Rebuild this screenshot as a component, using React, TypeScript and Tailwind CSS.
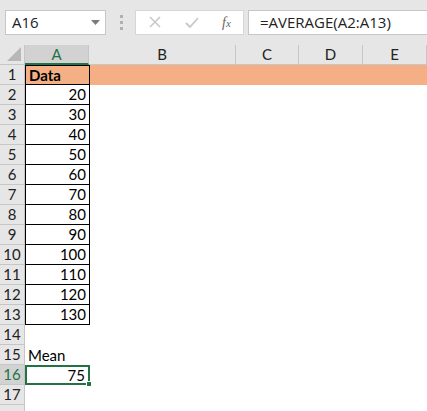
import React from "react";

const COLS = [
  { label: "A", w: "w-[64px]" },
  { label: "B", w: "w-[147px]" },
  { label: "C", w: "w-[63px]" },
  { label: "D", w: "w-[64px]" },
  { label: "E", w: "w-[64px]" },
];

const VALUES = [20, 30, 40, 50, 60, 70, 80, 90, 100, 110, 120, 130];

const cellFont = { fontFamily: "Lato, 'Liberation Sans', sans-serif" };

function RowHeader({ n, active }: { n?: number; active?: boolean }) {
  return (
    <div
      className={`flex h-full w-[25px] shrink-0 items-center justify-center border-r border-b border-[#c6c6c6] text-[15px] ${
        active ? "bg-[#d2d2d2] text-[#217346]" : "bg-[#e6e6e6] text-[#222]"
      }`}
      style={cellFont}
    >
      {n}
    </div>
  );
}

function Row({ n, children, fill }: { n?: number; children?: React.ReactNode; fill?: boolean }) {
  return (
    <div className={`flex h-[20px] ${fill ? "bg-[#f4b084]" : "bg-white"}`}>
      <RowHeader n={n} active={n === 16} />
      {children}
    </div>
  );
}

export default function App() {
  return (
    <div className="h-[411px] w-[427px] overflow-hidden bg-white" style={cellFont}>
      {/* formula bar */}
      <div className="flex h-[45px] items-center bg-[#e6e6e6] pb-px">
        <div className="ml-[5px] flex h-[25px] w-[101px] items-center justify-between border border-[#c6c6c6] bg-white pl-[6px] pr-[5px]">
          <span className="text-[15px] text-[#222]" style={{ fontFamily: "'Open Sans', 'Liberation Sans', sans-serif" }}>
            A16
          </span>
          <svg width="9" height="5" viewBox="0 0 9 5">
            <path d="M0 0h9L4.5 5z" fill="#7a7a7a" />
          </svg>
        </div>
        <div className="ml-[14px] flex w-[3px] flex-col gap-[3px]">
          <span className="h-[3px] w-[3px] bg-[#b0b0b0]" />
          <span className="h-[3px] w-[3px] bg-[#b0b0b0]" />
          <span className="h-[3px] w-[3px] bg-[#b0b0b0]" />
        </div>
        <div className="ml-[12px] flex h-[25px] w-[109px] items-center border border-[#d6d6d6] bg-white">
          <svg width="12" height="12" viewBox="0 0 12 12" className="ml-[13px]">
            <path d="M1 1l10 10M11 1L1 11" stroke="#c8c8c8" strokeWidth="1.6" />
          </svg>
          <svg width="14" height="11" viewBox="0 0 14 11" className="ml-[24px]">
            <path d="M1 6l4 4 8-9" stroke="#c8c8c8" strokeWidth="1.8" fill="none" />
          </svg>
          <span className="ml-[23px] text-[14px] italic text-[#666]" style={{ fontFamily: "'Liberation Serif', serif" }}>
            f<span className="text-[11px]">x</span>
          </span>
        </div>
        <div className="ml-[4px] flex h-[25px] flex-1 items-center border-y border-l border-[#c6c6c6] bg-white pl-[11px]">
          <span className="text-[15px] text-[#222]" style={{ fontFamily: "'Open Sans', 'Liberation Sans', sans-serif" }}>
            =AVERAGE(A2:A13)
          </span>
        </div>
      </div>

      {/* column headers */}
      <div className="flex h-[20px] bg-[#e6e6e6]">
        <div className="relative w-[25px] shrink-0 border-r border-b border-[#c6c6c6]">
          <svg width="14" height="14" viewBox="0 0 14 14" className="absolute right-[3px] bottom-[3px]">
            <path d="M14 0v14H0z" fill="#b7b7b7" />
          </svg>
        </div>
        {COLS.map((c, i) => (
          <div
            key={c.label}
            className={`${c.w} flex shrink-0 items-center justify-center border-r text-[15px] ${
              i === 0
                ? "border-b-2 border-r-[#c6c6c6] border-b-[#217346] bg-[#d2d2d2] text-[#217346]"
                : "border-b border-[#c6c6c6] text-[#222]"
            }`}
          >
            {c.label}
          </div>
        ))}
      </div>

      {/* rows */}
      <Row n={1} fill>
        <div className="flex w-[65px] shrink-0 items-center border border-black pl-[3px] text-[15px] font-bold text-black">
          Data
        </div>
      </Row>
      {VALUES.map((v, i) => (
        <Row key={v} n={i + 2}>
          <div className="flex w-[65px] shrink-0 items-center justify-end border-x border-b border-black pr-[3px] text-[15px] text-black">
            {v}
          </div>
        </Row>
      ))}
      <Row n={14} />
      <Row n={15}>
        <div className="flex items-center pl-[3px] text-[15px] text-black">Mean</div>
      </Row>
      <Row n={16}>
        <div className="relative flex w-[65px] shrink-0 items-center justify-end border-2 border-[#217346] pr-[3px] text-[15px] text-black">
          75
          <span className="absolute -right-[4px] -bottom-[4px] h-[6px] w-[6px] border border-white bg-[#217346]" />
        </div>
      </Row>
      <Row n={17} />
      <Row />
    </div>
  );
}
